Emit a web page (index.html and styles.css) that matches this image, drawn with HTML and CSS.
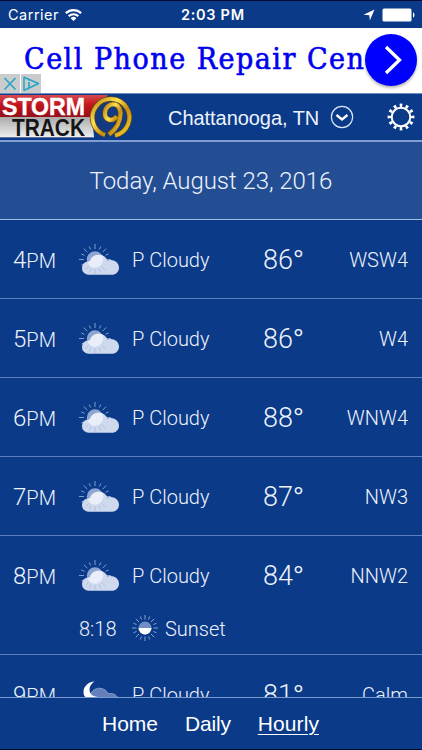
FILE: index.html
```html
<!DOCTYPE html>
<html lang="en">
<head>
  <meta charset="UTF-8">
  <title>Storm Track 9 - Hourly</title>
  <link rel="stylesheet" href="styles.css">
</head>
<body>

  <!-- Shared icons -->
  <svg class="defs">
    <symbol id="rays" viewBox="0 0 26 26">
      <path d="M13 0v4.500M13 21.500V26M0 13h4.500M21.500 13H26M3.800 3.800L7 7M19 19l3.200 3.200M3.800 22.200L7 19M19 7l3.200-3.200M8.300 1.500l1.200 3M16.500 21.500l1.200 3M17.700 1.500l-1.200 3M9.500 21.500l-1.200 3M1.500 8.300l3 1.200M21.500 16.500l3 1.200M1.500 17.700l3-1.200M21.500 9.500l3-1.200" stroke="#88a2d0" stroke-width="1" fill="none"/>
    </symbol>
    <symbol id="pcloudy" viewBox="0 0 42 32">
      <path d="M16 0v5M0 15.500h5M27 15.500h5M4.700 4.500l3.600 3.600M23.700 8.100l3.500-3.600M10.200 2.500l1.400 3M21.800 2.500l-1.400 3M2.300 10l3.200 1.300M26.600 11.200l3-1.200M2.500 21l3-1.500" stroke="#829dcd" stroke-width="1" fill="none"/>
      <circle cx="16" cy="15.500" r="8.200" fill="#8fa6d3"/>
      <path d="M10 30.800a6.700 6.700 0 1 1 .8-13.300c.8-4 4.500-6.700 8.800-6.700 4.400 0 7.500 2.400 9 5.600 5.700-1.400 11.400 1.600 11.400 7.300 0 4.100-3.200 7.100-7.200 7.100z" fill="#ced9ee"/>
      <path d="M11.300 16.800c1-3.600 4.300-6 8.300-6 1.500 0 2.800.3 4 .8.500 1.200.7 2.500.6 4-.3 4.800-3.800 8.100-8.200 8.100-3.500 0-6.200-2.200-7.400-5.200z" fill="#e9eef8"/>
      <path d="M16 25v5M9.500 22.500l-2.800 3M22.500 22.500l4 3.500M12 24.500l-1.700 4M20 24.500l1.800 4" stroke="#b1c2e2" stroke-width="1"/>
    </symbol>
  </svg>

  <div class="status">
    <span class="carrier">Carrier</span>
    <svg class="wifi" viewBox="0 0 16 13">
      <g fill="none" stroke="#fff" stroke-width="2.100">
        <path d="M.8 4.700a10.400 10.400 0 0 1 14.400 0"/>
        <path d="M3.500 7.600a6.500 6.500 0 0 1 9 0"/>
      </g>
      <path d="M8 12.200L5.300 9.500a3.900 3.900 0 0 1 5.400 0z" fill="#fff"/>
    </svg>
    <span class="clock">2:03 PM</span>
    <svg class="locate" viewBox="0 0 12 12"><path d="M11.500.5L6.800 11.500 6.300 6.200.5 5.800z" fill="#fff"/></svg>
    <svg class="battery" viewBox="0 0 33 14">
      <rect x=".5" y=".5" width="29" height="13" rx="1.500" fill="#fff"/>
      <path d="M31 4.500c2 .5 2 4.500 0 5z" fill="#fff"/>
    </svg>
  </div>

  <div class="ad">
    <span class="ad-text">Cell Phone Repair Cen</span>
    <div class="ad-arrow">
      <svg viewBox="0 0 20 30"><path d="M3 2l13.500 13L3 28" fill="none" stroke="#fff" stroke-width="3.300"/></svg>
    </div>
    <div class="ad-choices">
      <svg viewBox="0 0 20 19"><path d="M4.500 4l11 11.500M15.500 4l-11 11.500" stroke="#21a6c4" stroke-width="1.500"/></svg>
      <svg viewBox="0 0 20 19"><path d="M3 3.200v13L6 15l11.500-5.500L3 3.200z" fill="none" stroke="#21a6c4" stroke-width="1.500" stroke-linejoin="round"/><path d="M8 8v6M8 5.500v1.300" stroke="#21a6c4" stroke-width="1.600"/></svg>
    </div>
  </div>

  <div class="header">
    <svg class="logo" viewBox="0 0 134 46">
      <defs>
        <linearGradient id="red" x1="0" y1="0" x2="0" y2="1">
          <stop offset="0" stop-color="#d64a50"/>
          <stop offset=".45" stop-color="#c4141d"/>
          <stop offset="1" stop-color="#93101a"/>
        </linearGradient>
        <linearGradient id="silver" x1="0" y1="0" x2="0" y2="1">
          <stop offset="0" stop-color="#aaa"/>
          <stop offset="1" stop-color="#eee"/>
        </linearGradient>
        <linearGradient id="gold" x1="0" y1="0" x2="1" y2="1">
          <stop offset="0" stop-color="#b88216"/>
          <stop offset=".35" stop-color="#ffe34f"/>
          <stop offset=".6" stop-color="#c38e13"/>
          <stop offset="1" stop-color="#f7cf2f"/>
        </linearGradient>
      </defs>
      <path d="M0 1h108L91 23H0z" fill="url(#red)"/>
      <path d="M0 23h92l2 20H0z" fill="url(#silver)"/>
      <path d="M0 43.500h94" stroke="#63719b"/>
      <text x="2" y="20.500" textLength="83" lengthAdjust="spacingAndGlyphs" class="logo-top">STORM</text>
      <text x="12" y="42" textLength="73" lengthAdjust="spacingAndGlyphs" class="logo-bottom">TRACK</text>
      <circle cx="111" cy="23.500" r="18" fill="#133a82"/>
      <g fill="none">
        <path d="M105 41a18.500 18.500 0 1 1 10 0.500" stroke="#6d4a0c" stroke-width="5.200"/>
        <path d="M105 41a18.500 18.500 0 1 1 10 0.500" stroke="url(#gold)" stroke-width="3.800"/>
        <path d="M117 22.500c-5 6-13 3.500-12-4.500 1-9 14.500-12 15.500.5 0 10-3.500 16-11.500 22" stroke="#6d4a0c" stroke-width="5.200"/>
        <path d="M117 22.500c-5 6-13 3.500-12-4.500 1-9 14.500-12 15.500.5 0 10-3.500 16-11.500 22" stroke="url(#gold)" stroke-width="4"/>
      </g>
    </svg>
    <span class="city">Chattanooga, TN</span>
    <svg class="chevron" viewBox="0 0 24 24">
      <circle cx="12" cy="12" r="10.600" fill="none" stroke="#dce7f8" stroke-width="1.200"/>
      <path d="M6.500 10l5.500 4.500 5.500-4.500" fill="none" stroke="#fff" stroke-width="2.300"/>
    </svg>
    <svg class="gear" viewBox="0 0 28 28">
      <circle cx="14" cy="14" r="9.300" fill="none" stroke="#fff" stroke-width="2"/>
      <circle cx="14" cy="14" r="11.700" fill="none" stroke="#fff" stroke-width="3.400" pathLength="120" stroke-dasharray="4.400 5.600" stroke-dashoffset="2.200"/>
    </svg>
  </div>

  <div class="date">Today, August 23, 2016</div>

  <div class="hours">
    <div class="hour">
      <div class="hour-main">
        <span class="time">4<small>PM</small></span>
        <svg class="icon"><use href="#pcloudy"/></svg>
        <span class="sky">P Cloudy</span>
        <span class="temp">86<i>°</i></span>
        <span class="wind">WSW4</span>
      </div>
    </div>
    <div class="hour">
      <div class="hour-main">
        <span class="time">5<small>PM</small></span>
        <svg class="icon"><use href="#pcloudy"/></svg>
        <span class="sky">P Cloudy</span>
        <span class="temp">86<i>°</i></span>
        <span class="wind">W4</span>
      </div>
    </div>
    <div class="hour">
      <div class="hour-main">
        <span class="time">6<small>PM</small></span>
        <svg class="icon"><use href="#pcloudy"/></svg>
        <span class="sky">P Cloudy</span>
        <span class="temp">88<i>°</i></span>
        <span class="wind">WNW4</span>
      </div>
    </div>
    <div class="hour">
      <div class="hour-main">
        <span class="time">7<small>PM</small></span>
        <svg class="icon"><use href="#pcloudy"/></svg>
        <span class="sky">P Cloudy</span>
        <span class="temp">87<i>°</i></span>
        <span class="wind">NW3</span>
      </div>
    </div>
    <div class="hour">
      <div class="hour-main">
        <span class="time">8<small>PM</small></span>
        <svg class="icon"><use href="#pcloudy"/></svg>
        <span class="sky">P Cloudy</span>
        <span class="temp">84<i>°</i></span>
        <span class="wind">NNW2</span>
      </div>
      <div class="sunset">
        <span class="sunset-time">8:18</span>
        <svg class="sunset-icon" viewBox="0 0 26 26">
          <use href="#rays"/>
          <circle cx="13" cy="13" r="6.500" fill="#718fc5"/>
          <path d="M6.500 13h13a6.500 6.500 0 0 1-13 0z" fill="#fff"/>
        </svg>
        <span class="sunset-label">Sunset</span>
      </div>
    </div>
    <div class="hour">
      <div class="hour-main">
        <span class="time">9<small>PM</small></span>
        <svg class="icon" viewBox="0 0 42 32">
          <path d="M10 30.500a6.700 6.700 0 1 1 .8-13.300c.8-4 4.500-8 9.500-8 4.400 0 7.500 2.400 9 5.600 5-1.400 9.700 1.600 10.700 7.300 0 4.100-3.200 8.400-7.200 8.400z" fill="#647fb9" stroke="#91a8d4" stroke-width=".8"/>
          <path d="M15.500 2.500C9 3 4.500 7.500 4.500 13c0 6.200 4.500 7 10 7 3 0 5.500-.2 7-2-7.500 0-11-2.500-11-7.500 0-3.500 2-6 5-8z" fill="#fff"/>
        </svg>
        <span class="sky">P Cloudy</span>
        <span class="temp">81<i>°</i></span>
        <span class="wind">Calm</span>
      </div>
    </div>
  </div>

  <div class="tabs">
    <a class="tab home">Home</a>
    <a class="tab daily">Daily</a>
    <a class="tab hourly active">Hourly</a>
  </div>

</body>
</html>
```
FILE: styles.css
```css
* {
  box-sizing: border-box;
}

body {
  margin: 0;
  height: 750px;
  display: flex;
  flex-direction: column;
  overflow: hidden;
  background-color: #0b3a88;
  border-top: 1px solid #030a33;
  border-bottom: 1px solid #020d2e;
  font-family: Roboto, "Liberation Sans", sans-serif;
  font-weight: 300;
  color: #edf3fd;
  white-space: nowrap;
}

svg {
  display: block;
  flex: none;
}

.defs {
  position: absolute;
  width: 0;
  height: 0;
}

/* Status bar */
.status {
  height: 27px;
  flex: none;
  display: grid;
  grid-template-columns: 57px 125px 173px 19px 33px;
  align-items: center;
  padding-left: 8px;
  font-family: Inter, sans-serif;
  font-weight: 400;
  font-size: 14.500px;
  letter-spacing: 0.5px;
  color: #fff;
}

.wifi {
  width: 17px;
  height: 14px;
}

.clock {
  font-weight: 600;
  font-size: 14.500px;
  letter-spacing: 0.7px;
  margin-left: -9px;
}

.locate {
  width: 12px;
  height: 12px;
}

.battery {
  width: 33px;
  height: 14px;
}

/* Banner ad */
.ad {
  position: relative;
  height: 65px;
  flex: none;
  background-color: #fff;
  padding-left: 24px;
  line-height: 62px;
}

.ad-text {
  font-family: "DejaVu Serif Condensed", "DejaVu Serif", serif;
  font-stretch: condensed;
  font-weight: 400;
  font-size: 30px;
  letter-spacing: 1.500px;
  color: #00e;
  -webkit-text-stroke: 0.6px #00e;
}

.ad-arrow {
  position: absolute;
  right: 5px;
  top: 6px;
  width: 52px;
  height: 52px;
  border-radius: 50%;
  background-color: #00f;
  box-shadow: 0 2px 3px rgba(0, 0, 0, 0.3);
  display: flex;
  align-items: center;
  justify-content: center;
}

.ad-arrow svg {
  width: 20px;
  height: 30px;
  margin-left: 3px;
}

.ad-choices {
  position: absolute;
  left: 0;
  bottom: 0;
  display: flex;
  gap: 1px;
}

.ad-choices svg {
  width: 20px;
  height: 19px;
  background-color: #c9cbcd;
}

/* Header */
.header {
  height: 49px;
  flex: none;
  display: flex;
  align-items: center;
  border-top: 1px solid #6d8cc2;
  border-bottom: 2px solid #7f9fd2;
}

.logo {
  width: 134px;
  height: 46px;
}

.logo-top,
.logo-bottom {
  font-family: "Liberation Sans", sans-serif;
  font-weight: bold;
  font-size: 24px;
}

.logo-top {
  fill: #fff;
  stroke: #fff;
  stroke-width: 0.4px;
}

.logo-bottom {
  fill: #151515;
}

.city {
  width: 163px;
  padding-left: 34px;
  margin-right: 33px;
  font-family: "Liberation Sans", sans-serif;
  font-weight: 400;
  font-size: 20px;
  line-height: 24px;
  padding-top: 2px;
  letter-spacing: -0.050px;
}

.chevron {
  width: 24px;
  height: 24px;
}

.gear {
  width: 28px;
  height: 28px;
  margin-left: 33px;
}

.date {
  height: 78px;
  flex: none;
  line-height: 79px;
  text-align: center;
  background-color: #244e94;
  border-bottom: 1px solid #a5bce3;
  font-size: 24px;
  letter-spacing: -0.050px;
}

/* Hourly list */
.hours {
  flex: 1;
  min-height: 0;
  overflow: hidden;
}

.hour {
  border-bottom: 1px solid #5c80bd;
}

.hour-main {
  height: 78px;
  display: grid;
  grid-template-columns: 66px 53px 131px 60px 1fr;
  align-items: center;
  padding: 2px 14px 0 13px;
}

.time {
  font-size: 24px;
}

.time small {
  font-size: 20px;
}

.icon {
  width: 42px;
  height: 32px;
}

.sky,
.wind {
  font-size: 20px;
}

.wind {
  text-align: right;
}

.temp {
  font-size: 27px;
}

.temp i {
  font-family: "Liberation Sans", sans-serif;
  font-style: normal;
  line-height: 1;
}

.sunset {
  height: 40px;
  display: grid;
  grid-template-columns: 53px 33px 1fr;
  padding-left: 79px;
  font-size: 20px;
  line-height: 30px;
}

.sunset-icon {
  width: 26px;
  height: 26px;
  margin-top: 1px;
}

/* Bottom tabs */
.tabs {
  height: 52px;
  flex: none;
  display: flex;
  padding-left: 102px;
  gap: 27px;
  border-top: 1px solid #7b9bd0;
  font-family: "Liberation Sans", sans-serif;
  font-weight: 400;
  font-size: 21px;
  line-height: 52px;
  color: #fff;
}

.tab.daily {
  letter-spacing: -0.2px;
}

.tab.active {
  letter-spacing: 0.1px;
  text-decoration: underline;
  text-decoration-thickness: 1px;
  text-underline-offset: 3px;
}
```
